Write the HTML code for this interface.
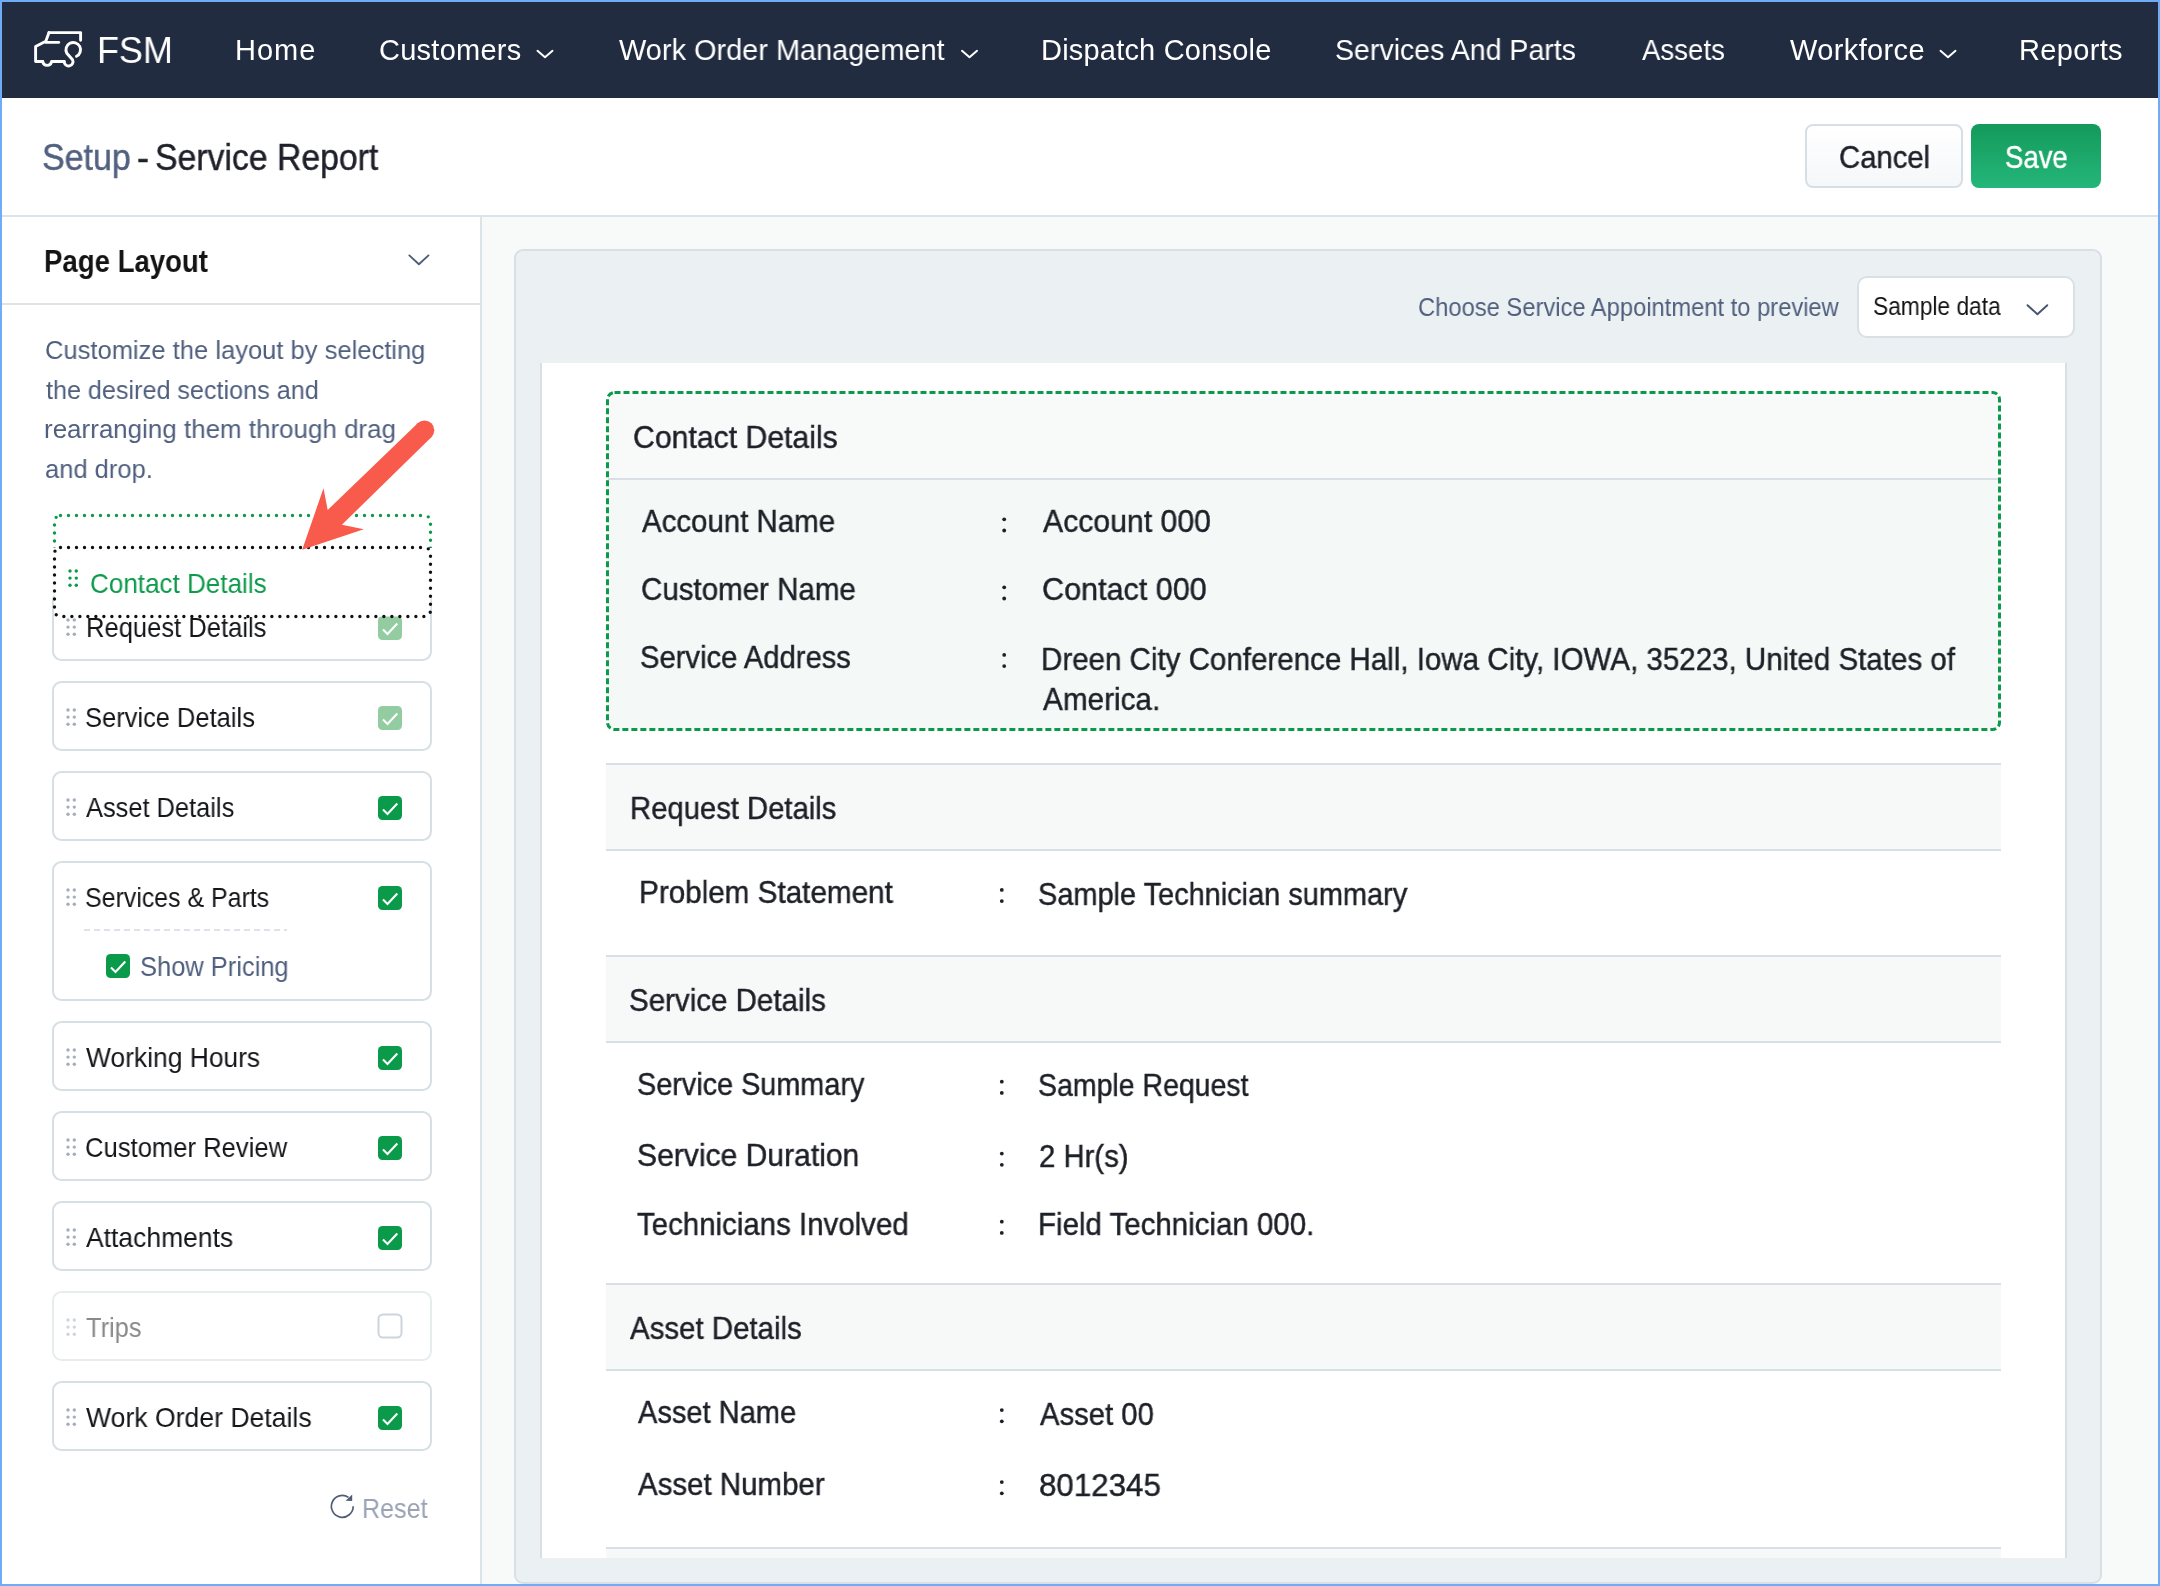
<!DOCTYPE html>
<html><head><meta charset="utf-8">
<style>
html,body{margin:0;padding:0;width:2160px;height:1586px;overflow:hidden;background:#6eacf8;}
body{position:relative;font-family:"Liberation Sans",sans-serif;}
.abs{position:absolute;}
.tx{position:absolute;white-space:nowrap;line-height:1;will-change:transform;}
svg{position:absolute;left:0;top:0;overflow:visible}
</style></head><body>
<div class="abs" style="left:2px;top:2px;width:2156px;height:1582px;background:#f8f9f9;overflow:hidden"></div>
<!-- nav -->
<div class="abs" style="left:2px;top:2px;width:2156px;height:96px;background:#222c40"></div>
<!-- header -->
<div class="abs" style="left:2px;top:98px;width:2156px;height:117px;background:#ffffff"></div>
<div class="abs" style="left:2px;top:215px;width:2156px;height:2px;background:#dce3e9"></div>
<!-- left panel -->
<div class="abs" style="left:2px;top:217px;width:478px;height:1367px;background:#ffffff"></div>
<div class="abs" style="left:480px;top:217px;width:2px;height:1367px;background:#dce3e9"></div>
<div class="abs" style="left:2px;top:303px;width:478px;height:2px;background:#dce3e9"></div>
<!-- buttons -->
<div class="abs" style="left:1805px;top:124px;width:154px;height:60px;border:2px solid #d6dfe5;border-radius:8px;background:linear-gradient(#ffffff,#f5f7f9)"></div>
<div class="abs" style="left:1971px;top:124px;width:130px;height:64px;border-radius:8px;background:linear-gradient(#139a5b,#25b67a)"></div>
<!-- preview panel -->
<div class="abs" style="left:514px;top:249px;width:1584px;height:1331px;border:2px solid #d8e0e6;border-radius:9px;background:#ebf0f3"></div>
<div class="abs" style="left:1857px;top:276px;width:214px;height:58px;border:2px solid #d8e0e6;border-radius:10px;background:#ffffff"></div>
<div class="abs" style="left:540px;top:363px;width:1523px;height:1195px;border-left:2px solid #d8e0e6;border-right:2px solid #d8e0e6;background:#ffffff"></div>
<!-- contact box -->
<div class="abs" style="left:608px;top:393px;width:1391px;height:336px;border-radius:7px;background:#f4f9f7;overflow:hidden">
  <div class="abs" style="left:0;top:0;width:1391px;height:85px;background:#f8f9f9"></div>
  <div class="abs" style="left:0;top:85px;width:1391px;height:2px;background:#d8e0e6"></div>
</div>
<svg width="2160" height="1586" style="z-index:3"><rect x="607.5" y="392.5" width="1392" height="337" rx="7" fill="none" stroke="#0a9a4a" stroke-width="3" stroke-dasharray="6 3"/></svg>
<!-- sections -->
<div class="abs" style="left:606px;top:763px;width:1395px;height:84px;border-top:2px solid #d8e0e6;border-bottom:2px solid #d8e0e6;background:#f7f9f9"></div>
<div class="abs" style="left:606px;top:955px;width:1395px;height:84px;border-top:2px solid #d8e0e6;border-bottom:2px solid #d8e0e6;background:#f7f9f9"></div>
<div class="abs" style="left:606px;top:1283px;width:1395px;height:84px;border-top:2px solid #d8e0e6;border-bottom:2px solid #d8e0e6;background:#f7f9f9"></div>
<div class="abs" style="left:606px;top:1547px;width:1395px;height:9px;border-top:2px solid #d8e0e6;background:#f7f9f9"></div>
<svg width="2160" height="1586" style="z-index:4">
<rect x="53" y="592" width="378" height="68" rx="8.5" fill="#fff" stroke="#d6dfe3" stroke-width="2"/>
<circle cx="68.0" cy="620.0" r="1.7" fill="#a6adbd"/><circle cx="74.3" cy="620.0" r="1.7" fill="#a6adbd"/><circle cx="68.0" cy="627.1" r="1.7" fill="#a6adbd"/><circle cx="74.3" cy="627.1" r="1.7" fill="#a6adbd"/><circle cx="68.0" cy="634.2" r="1.7" fill="#a6adbd"/><circle cx="74.3" cy="634.2" r="1.7" fill="#a6adbd"/>
<rect x="378" y="616" width="24" height="24" rx="4.5" fill="#94cca2"/><path d="M383.0 629.5 L387.5 634.0 L397.3 623.5" fill="none" stroke="#fff" stroke-width="2.1" stroke-linecap="butt"/>
<rect x="53" y="682" width="378" height="68" rx="8.5" fill="#fff" stroke="#d6dfe3" stroke-width="2"/>
<circle cx="68.0" cy="710.0" r="1.7" fill="#a6adbd"/><circle cx="74.3" cy="710.0" r="1.7" fill="#a6adbd"/><circle cx="68.0" cy="717.1" r="1.7" fill="#a6adbd"/><circle cx="74.3" cy="717.1" r="1.7" fill="#a6adbd"/><circle cx="68.0" cy="724.2" r="1.7" fill="#a6adbd"/><circle cx="74.3" cy="724.2" r="1.7" fill="#a6adbd"/>
<rect x="378" y="706" width="24" height="24" rx="4.5" fill="#94cca2"/><path d="M383.0 719.5 L387.5 724.0 L397.3 713.5" fill="none" stroke="#fff" stroke-width="2.1" stroke-linecap="butt"/>
<rect x="53" y="772" width="378" height="68" rx="8.5" fill="#fff" stroke="#d6dfe3" stroke-width="2"/>
<circle cx="68.0" cy="800.0" r="1.7" fill="#a6adbd"/><circle cx="74.3" cy="800.0" r="1.7" fill="#a6adbd"/><circle cx="68.0" cy="807.1" r="1.7" fill="#a6adbd"/><circle cx="74.3" cy="807.1" r="1.7" fill="#a6adbd"/><circle cx="68.0" cy="814.2" r="1.7" fill="#a6adbd"/><circle cx="74.3" cy="814.2" r="1.7" fill="#a6adbd"/>
<rect x="378" y="796" width="24" height="24" rx="4.5" fill="#0a9a4a"/><path d="M383.0 809.5 L387.5 814.0 L397.3 803.5" fill="none" stroke="#fff" stroke-width="2.1" stroke-linecap="butt"/>
<rect x="53" y="862" width="378" height="138" rx="8.5" fill="#fff" stroke="#d6dfe3" stroke-width="2"/>
<circle cx="68.0" cy="890.0" r="1.7" fill="#a6adbd"/><circle cx="74.3" cy="890.0" r="1.7" fill="#a6adbd"/><circle cx="68.0" cy="897.1" r="1.7" fill="#a6adbd"/><circle cx="74.3" cy="897.1" r="1.7" fill="#a6adbd"/><circle cx="68.0" cy="904.2" r="1.7" fill="#a6adbd"/><circle cx="74.3" cy="904.2" r="1.7" fill="#a6adbd"/>
<rect x="378" y="886" width="24" height="24" rx="4.5" fill="#0a9a4a"/><path d="M383.0 899.5 L387.5 904.0 L397.3 893.5" fill="none" stroke="#fff" stroke-width="2.1" stroke-linecap="butt"/>
<rect x="53" y="1022" width="378" height="68" rx="8.5" fill="#fff" stroke="#d6dfe3" stroke-width="2"/>
<circle cx="68.0" cy="1050.0" r="1.7" fill="#a6adbd"/><circle cx="74.3" cy="1050.0" r="1.7" fill="#a6adbd"/><circle cx="68.0" cy="1057.1" r="1.7" fill="#a6adbd"/><circle cx="74.3" cy="1057.1" r="1.7" fill="#a6adbd"/><circle cx="68.0" cy="1064.2" r="1.7" fill="#a6adbd"/><circle cx="74.3" cy="1064.2" r="1.7" fill="#a6adbd"/>
<rect x="378" y="1046" width="24" height="24" rx="4.5" fill="#0a9a4a"/><path d="M383.0 1059.5 L387.5 1064.0 L397.3 1053.5" fill="none" stroke="#fff" stroke-width="2.1" stroke-linecap="butt"/>
<rect x="53" y="1112" width="378" height="68" rx="8.5" fill="#fff" stroke="#d6dfe3" stroke-width="2"/>
<circle cx="68.0" cy="1140.0" r="1.7" fill="#a6adbd"/><circle cx="74.3" cy="1140.0" r="1.7" fill="#a6adbd"/><circle cx="68.0" cy="1147.1" r="1.7" fill="#a6adbd"/><circle cx="74.3" cy="1147.1" r="1.7" fill="#a6adbd"/><circle cx="68.0" cy="1154.2" r="1.7" fill="#a6adbd"/><circle cx="74.3" cy="1154.2" r="1.7" fill="#a6adbd"/>
<rect x="378" y="1136" width="24" height="24" rx="4.5" fill="#0a9a4a"/><path d="M383.0 1149.5 L387.5 1154.0 L397.3 1143.5" fill="none" stroke="#fff" stroke-width="2.1" stroke-linecap="butt"/>
<rect x="53" y="1202" width="378" height="68" rx="8.5" fill="#fff" stroke="#d6dfe3" stroke-width="2"/>
<circle cx="68.0" cy="1230.0" r="1.7" fill="#a6adbd"/><circle cx="74.3" cy="1230.0" r="1.7" fill="#a6adbd"/><circle cx="68.0" cy="1237.1" r="1.7" fill="#a6adbd"/><circle cx="74.3" cy="1237.1" r="1.7" fill="#a6adbd"/><circle cx="68.0" cy="1244.2" r="1.7" fill="#a6adbd"/><circle cx="74.3" cy="1244.2" r="1.7" fill="#a6adbd"/>
<rect x="378" y="1226" width="24" height="24" rx="4.5" fill="#0a9a4a"/><path d="M383.0 1239.5 L387.5 1244.0 L397.3 1233.5" fill="none" stroke="#fff" stroke-width="2.1" stroke-linecap="butt"/>
<rect x="53" y="1292" width="378" height="68" rx="8.5" fill="#fff" stroke="#e7edee" stroke-width="2"/>
<circle cx="68.0" cy="1320.0" r="1.7" fill="#d0d4dd"/><circle cx="74.3" cy="1320.0" r="1.7" fill="#d0d4dd"/><circle cx="68.0" cy="1327.1" r="1.7" fill="#d0d4dd"/><circle cx="74.3" cy="1327.1" r="1.7" fill="#d0d4dd"/><circle cx="68.0" cy="1334.2" r="1.7" fill="#d0d4dd"/><circle cx="74.3" cy="1334.2" r="1.7" fill="#d0d4dd"/>
<rect x="378.5" y="1314.5" width="23" height="23" rx="4.5" fill="#fff" stroke="#ced4dd" stroke-width="2"/>
<rect x="53" y="1382" width="378" height="68" rx="8.5" fill="#fff" stroke="#d6dfe3" stroke-width="2"/>
<circle cx="68.0" cy="1410.0" r="1.7" fill="#a6adbd"/><circle cx="74.3" cy="1410.0" r="1.7" fill="#a6adbd"/><circle cx="68.0" cy="1417.1" r="1.7" fill="#a6adbd"/><circle cx="74.3" cy="1417.1" r="1.7" fill="#a6adbd"/><circle cx="68.0" cy="1424.2" r="1.7" fill="#a6adbd"/><circle cx="74.3" cy="1424.2" r="1.7" fill="#a6adbd"/>
<rect x="378" y="1406" width="24" height="24" rx="4.5" fill="#0a9a4a"/><path d="M383.0 1419.5 L387.5 1424.0 L397.3 1413.5" fill="none" stroke="#fff" stroke-width="2.1" stroke-linecap="butt"/>
<line x1="84" y1="930" x2="287" y2="930" stroke="#d3dae2" stroke-width="1.5" stroke-dasharray="6 4"/>
<rect x="106" y="954" width="24" height="24" rx="4.5" fill="#0a9a4a"/><path d="M111.0 967.5 L115.5 972.0 L125.3 961.5" fill="none" stroke="#fff" stroke-width="2.1" stroke-linecap="butt"/>
<path d="M537.5 50.8 L545.0 57.3 L552.5 50.8" fill="none" stroke="#ffffff" stroke-width="2" stroke-linecap="round" stroke-linejoin="round"/>
<path d="M962.0 50.8 L969.5 57.3 L977.0 50.8" fill="none" stroke="#ffffff" stroke-width="2" stroke-linecap="round" stroke-linejoin="round"/>
<path d="M1940.5 50.8 L1948.0 57.3 L1955.5 50.8" fill="none" stroke="#ffffff" stroke-width="2" stroke-linecap="round" stroke-linejoin="round"/>
<path d="M409.3 255.4 L418.9 264.2 L428.5 255.4" fill="none" stroke="#4d5d7a" stroke-width="1.9" stroke-linecap="round" stroke-linejoin="round"/>
<path d="M2027.5 305.2 L2037.4 314.2 L2047.3 305.2" fill="none" stroke="#46546f" stroke-width="1.9" stroke-linecap="round" stroke-linejoin="round"/>
<path d="M353.2 1506.3 A10.9 10.9 0 1 1 348.5 1497.4" fill="none" stroke="#4f5d78" stroke-width="1.7"/><path d="M345.6 1500.8 L352.2 1494.6 L352.2 1501 Z" fill="#4f5d78"/>
</svg>
<svg style="position:absolute;left:30px;top:27px" width="58" height="46" viewBox="30 27 58 46">
<g fill="none" stroke="#fff" stroke-width="2.9" stroke-linejoin="round" stroke-linecap="round">
<path d="M49 32.6 L80.6 32.6 L80.6 40.2"/>
<path d="M49 32.6 L45.8 41.2 L35.6 46.5 L35.6 61.5 L42.7 61.5"/>
<path d="M45.8 42.4 L58.7 42.4"/>
<path d="M42.7 61.5 A4.5 4.5 0 0 0 51.6 61.5 L64.2 61.5"/>
<path d="M76.5 56.3 A7.3 7.3 0 1 0 66.8 53.2 L72.6 59.8 A4.4 4.4 0 1 1 64.2 61.5"/>
</g></svg>
<svg width="2160" height="1586" style="z-index:6"><defs><clipPath id="gclip"><rect x="40" y="500" width="400" height="48"/></clipPath></defs><rect clip-path="url(#gclip)" x="54.5" y="515.5" width="376" height="68" rx="6" fill="none" stroke="#0a9a4a" stroke-width="3.4" stroke-linecap="round" stroke-dasharray="0 8"/></svg>
<svg width="2160" height="1586" style="z-index:7"><rect x="54.5" y="547.5" width="376" height="69" rx="6" fill="#ffffff" stroke="#111111" stroke-width="3.4" stroke-linecap="round" stroke-dasharray="0 8"/><circle cx="70.0" cy="571.0" r="1.7" fill="#0e9a4c"/><circle cx="76.3" cy="571.0" r="1.7" fill="#0e9a4c"/><circle cx="70.0" cy="578.1" r="1.7" fill="#0e9a4c"/><circle cx="76.3" cy="578.1" r="1.7" fill="#0e9a4c"/><circle cx="70.0" cy="585.2" r="1.7" fill="#0e9a4c"/><circle cx="76.3" cy="585.2" r="1.7" fill="#0e9a4c"/></svg>
<svg width="2160" height="1586" style="z-index:9"><circle cx="424.5" cy="430.2" r="9.8" fill="#f85a4b"/><path d="M431.3 437.2 L417.7 423.2 L327.7 510 L323.5 488.2 L302.2 549.7 L363.8 529.3 L341.9 524.8 Z" fill="#f85a4b"/></svg>
<svg width="2160" height="1586" style="z-index:5"><circle cx="1004.2" cy="519.30" r="1.9" fill="#1e2028"/><circle cx="1004.2" cy="530.50" r="1.9" fill="#1e2028"/><circle cx="1004.2" cy="587.30" r="1.9" fill="#1e2028"/><circle cx="1004.2" cy="598.50" r="1.9" fill="#1e2028"/><circle cx="1004.2" cy="654.90" r="1.9" fill="#1e2028"/><circle cx="1004.2" cy="666.10" r="1.9" fill="#1e2028"/><circle cx="1001.8" cy="889.90" r="1.9" fill="#1e2028"/><circle cx="1001.8" cy="901.10" r="1.9" fill="#1e2028"/><circle cx="1001.8" cy="1081.70" r="1.9" fill="#1e2028"/><circle cx="1001.8" cy="1092.90" r="1.9" fill="#1e2028"/><circle cx="1001.8" cy="1153.60" r="1.9" fill="#1e2028"/><circle cx="1001.8" cy="1164.80" r="1.9" fill="#1e2028"/><circle cx="1001.8" cy="1221.70" r="1.9" fill="#1e2028"/><circle cx="1001.8" cy="1232.90" r="1.9" fill="#1e2028"/><circle cx="1001.8" cy="1410.10" r="1.9" fill="#1e2028"/><circle cx="1001.8" cy="1421.30" r="1.9" fill="#1e2028"/><circle cx="1001.8" cy="1482.10" r="1.9" fill="#1e2028"/><circle cx="1001.8" cy="1493.30" r="1.9" fill="#1e2028"/></svg>
<div class="tx" style="left:97.00px;top:32.00px;font-size:37px;font-weight:400;color:#ffffff;letter-spacing:0.000px;z-index:5;transform:scaleX(0.9722);transform-origin:0 0">FSM</div>
<div class="tx" style="left:235.00px;top:36.00px;font-size:29px;font-weight:400;color:#ffffff;letter-spacing:1.000px;z-index:5">Home</div>
<div class="tx" style="left:379.00px;top:36.00px;font-size:29px;font-weight:400;color:#ffffff;letter-spacing:0.250px;z-index:5">Customers</div>
<div class="tx" style="left:619.00px;top:36.00px;font-size:29px;font-weight:400;color:#ffffff;letter-spacing:0.000px;z-index:5;transform:scaleX(0.9969);transform-origin:0 0">Work Order Management</div>
<div class="tx" style="left:1041.00px;top:36.00px;font-size:29px;font-weight:400;color:#ffffff;letter-spacing:0.200px;z-index:5">Dispatch Console</div>
<div class="tx" style="left:1335.00px;top:36.00px;font-size:29px;font-weight:400;color:#ffffff;letter-spacing:0.000px;z-index:5;transform:scaleX(0.9835);transform-origin:0 0">Services And Parts</div>
<div class="tx" style="left:1642.00px;top:36.00px;font-size:29px;font-weight:400;color:#ffffff;letter-spacing:0.000px;z-index:5;transform:scaleX(0.9535);transform-origin:0 0">Assets</div>
<div class="tx" style="left:1790.00px;top:36.00px;font-size:29px;font-weight:400;color:#ffffff;letter-spacing:0.375px;z-index:5">Workforce</div>
<div class="tx" style="left:2019.00px;top:36.00px;font-size:29px;font-weight:400;color:#ffffff;letter-spacing:0.333px;z-index:5">Reports</div>
<div class="tx" style="left:42.00px;top:140.00px;font-size:36px;font-weight:400;color:#52617f;letter-spacing:0.000px;z-index:5;transform:scaleX(0.9440);transform-origin:0 0;-webkit-text-stroke:0.45px #52617f">Setup</div>
<div class="tx" style="left:136.70px;top:140.00px;font-size:36px;font-weight:400;color:#1f2029;letter-spacing:0.000px;z-index:5;-webkit-text-stroke:0.45px #1f2029">-</div>
<div class="tx" style="left:154.70px;top:140.00px;font-size:36px;font-weight:400;color:#1f2029;letter-spacing:0.000px;z-index:5;transform:scaleX(0.9381);transform-origin:0 0;-webkit-text-stroke:0.45px #1f2029">Service Report</div>
<div class="tx" style="left:1838.50px;top:142.00px;font-size:31.7px;font-weight:400;color:#1f2029;letter-spacing:0.000px;z-index:5;transform:scaleX(0.9233);transform-origin:0 0;-webkit-text-stroke:0.45px #1f2029">Cancel</div>
<div class="tx" style="left:2005.00px;top:142.00px;font-size:31.7px;font-weight:400;color:#ffffff;letter-spacing:0.000px;z-index:5;transform:scaleX(0.8682);transform-origin:0 0;-webkit-text-stroke:0.45px #ffffff">Save</div>
<div class="tx" style="left:44.00px;top:245.00px;font-size:32px;font-weight:700;color:#141414;letter-spacing:0.000px;z-index:5;transform:scaleX(0.8617);transform-origin:0 0">Page Layout</div>
<div class="tx" style="left:44.60px;top:337.00px;font-size:26px;font-weight:400;color:#4f5f7d;letter-spacing:0.000px;z-index:5;transform:scaleX(0.9821);transform-origin:0 0">Customize the layout by selecting</div>
<div class="tx" style="left:45.60px;top:377.00px;font-size:26px;font-weight:400;color:#4f5f7d;letter-spacing:0.000px;z-index:5;transform:scaleX(0.9675);transform-origin:0 0">the desired sections and</div>
<div class="tx" style="left:43.60px;top:416.00px;font-size:26px;font-weight:400;color:#4f5f7d;letter-spacing:0.000px;z-index:5;transform:scaleX(0.9980);transform-origin:0 0">rearranging them through drag</div>
<div class="tx" style="left:44.60px;top:456.00px;font-size:26px;font-weight:400;color:#4f5f7d;letter-spacing:0.000px;z-index:5;transform:scaleX(0.9813);transform-origin:0 0">and drop.</div>
<div class="tx" style="left:89.70px;top:570.00px;font-size:27.3px;font-weight:400;color:#0e9a4c;letter-spacing:0.000px;z-index:8;transform:scaleX(0.9541);transform-origin:0 0">Contact Details</div>
<div class="tx" style="left:85.70px;top:614.00px;font-size:27.3px;font-weight:400;color:#151619;letter-spacing:0.000px;z-index:4;transform:scaleX(0.9363);transform-origin:0 0">Request Details</div>
<div class="tx" style="left:85.00px;top:704.00px;font-size:27.3px;font-weight:400;color:#151619;letter-spacing:0.000px;z-index:5;transform:scaleX(0.9333);transform-origin:0 0">Service Details</div>
<div class="tx" style="left:86.00px;top:794.00px;font-size:27.3px;font-weight:400;color:#151619;letter-spacing:0.000px;z-index:5;transform:scaleX(0.9309);transform-origin:0 0">Asset Details</div>
<div class="tx" style="left:85.00px;top:884.00px;font-size:27.3px;font-weight:400;color:#151619;letter-spacing:0.000px;z-index:5;transform:scaleX(0.9130);transform-origin:0 0">Services &amp; Parts</div>
<div class="tx" style="left:139.50px;top:953.00px;font-size:27.3px;font-weight:400;color:#4f5f7d;letter-spacing:0.000px;z-index:5;transform:scaleX(0.9331);transform-origin:0 0">Show Pricing</div>
<div class="tx" style="left:86.00px;top:1044.00px;font-size:27.3px;font-weight:400;color:#151619;letter-spacing:0.000px;z-index:5;transform:scaleX(0.9676);transform-origin:0 0">Working Hours</div>
<div class="tx" style="left:85.00px;top:1134.00px;font-size:27.3px;font-weight:400;color:#151619;letter-spacing:0.000px;z-index:5;transform:scaleX(0.9382);transform-origin:0 0">Customer Review</div>
<div class="tx" style="left:86.00px;top:1224.00px;font-size:27.3px;font-weight:400;color:#151619;letter-spacing:0.000px;z-index:5;transform:scaleX(0.9702);transform-origin:0 0">Attachments</div>
<div class="tx" style="left:86.00px;top:1314.00px;font-size:27.3px;font-weight:400;color:#8a8a8a;letter-spacing:0.000px;z-index:5;transform:scaleX(0.9313);transform-origin:0 0">Trips</div>
<div class="tx" style="left:86.00px;top:1404.00px;font-size:27.3px;font-weight:400;color:#151619;letter-spacing:0.000px;z-index:5;transform:scaleX(0.9745);transform-origin:0 0">Work Order Details</div>
<div class="tx" style="left:362.00px;top:1495.00px;font-size:27.8px;font-weight:400;color:#99a3b5;letter-spacing:0.000px;z-index:5;transform:scaleX(0.9016);transform-origin:0 0">Reset</div>
<div class="tx" style="left:1418.00px;top:295.00px;font-size:25.6px;font-weight:400;color:#4f5f7d;letter-spacing:0.000px;z-index:5;transform:scaleX(0.9272);transform-origin:0 0">Choose Service Appointment to preview</div>
<div class="tx" style="left:1872.50px;top:294.00px;font-size:25px;font-weight:400;color:#141414;letter-spacing:0.000px;z-index:5;transform:scaleX(0.9100);transform-origin:0 0">Sample data</div>
<div class="tx" style="left:632.50px;top:422.00px;font-size:31.7px;font-weight:400;color:#1e2028;letter-spacing:0.000px;z-index:5;transform:scaleX(0.9529);transform-origin:0 0;-webkit-text-stroke:0.45px #1e2028">Contact Details</div>
<div class="tx" style="left:641.60px;top:506.00px;font-size:31.7px;font-weight:400;color:#1e2028;letter-spacing:0.000px;z-index:5;transform:scaleX(0.9290);transform-origin:0 0;-webkit-text-stroke:0.45px #1e2028">Account Name</div>
<div class="tx" style="left:1043.20px;top:506.00px;font-size:31.7px;font-weight:400;color:#1e2028;letter-spacing:0.000px;z-index:5;transform:scaleX(0.9532);transform-origin:0 0;-webkit-text-stroke:0.45px #1e2028">Account 000</div>
<div class="tx" style="left:640.60px;top:574.00px;font-size:31.7px;font-weight:400;color:#1e2028;letter-spacing:0.000px;z-index:5;transform:scaleX(0.9313);transform-origin:0 0;-webkit-text-stroke:0.45px #1e2028">Customer Name</div>
<div class="tx" style="left:1042.20px;top:574.00px;font-size:31.7px;font-weight:400;color:#1e2028;letter-spacing:0.000px;z-index:5;transform:scaleX(0.9637);transform-origin:0 0;-webkit-text-stroke:0.45px #1e2028">Contact 000</div>
<div class="tx" style="left:639.60px;top:642.00px;font-size:31.7px;font-weight:400;color:#1e2028;letter-spacing:0.000px;z-index:5;transform:scaleX(0.9212);transform-origin:0 0;-webkit-text-stroke:0.45px #1e2028">Service Address</div>
<div class="tx" style="left:1041.20px;top:644.00px;font-size:31.7px;font-weight:400;color:#1e2028;letter-spacing:0.000px;z-index:5;transform:scaleX(0.9317);transform-origin:0 0;-webkit-text-stroke:0.45px #1e2028">Dreen City Conference Hall, Iowa City, IOWA, 35223, United States of</div>
<div class="tx" style="left:1043.20px;top:684.00px;font-size:31.7px;font-weight:400;color:#1e2028;letter-spacing:0.000px;z-index:5;transform:scaleX(0.9377);transform-origin:0 0;-webkit-text-stroke:0.45px #1e2028">America.</div>
<div class="tx" style="left:630.10px;top:793.00px;font-size:31.7px;font-weight:400;color:#1e2028;letter-spacing:0.000px;z-index:5;transform:scaleX(0.9227);transform-origin:0 0;-webkit-text-stroke:0.45px #1e2028">Request Details</div>
<div class="tx" style="left:638.60px;top:877.00px;font-size:31.7px;font-weight:400;color:#1e2028;letter-spacing:0.000px;z-index:5;transform:scaleX(0.9358);transform-origin:0 0;-webkit-text-stroke:0.45px #1e2028">Problem Statement</div>
<div class="tx" style="left:1038.40px;top:879.00px;font-size:31.7px;font-weight:400;color:#1e2028;letter-spacing:0.000px;z-index:5;transform:scaleX(0.9127);transform-origin:0 0;-webkit-text-stroke:0.45px #1e2028">Sample Technician summary</div>
<div class="tx" style="left:628.50px;top:985.00px;font-size:31.7px;font-weight:400;color:#1e2028;letter-spacing:0.000px;z-index:5;transform:scaleX(0.9313);transform-origin:0 0;-webkit-text-stroke:0.45px #1e2028">Service Details</div>
<div class="tx" style="left:636.90px;top:1069.00px;font-size:31.7px;font-weight:400;color:#1e2028;letter-spacing:0.000px;z-index:5;transform:scaleX(0.9093);transform-origin:0 0;-webkit-text-stroke:0.45px #1e2028">Service Summary</div>
<div class="tx" style="left:1038.40px;top:1070.00px;font-size:31.7px;font-weight:400;color:#1e2028;letter-spacing:0.000px;z-index:5;transform:scaleX(0.8987);transform-origin:0 0;-webkit-text-stroke:0.45px #1e2028">Sample Request</div>
<div class="tx" style="left:636.90px;top:1140.00px;font-size:31.7px;font-weight:400;color:#1e2028;letter-spacing:0.000px;z-index:5;transform:scaleX(0.9491);transform-origin:0 0;-webkit-text-stroke:0.45px #1e2028">Service Duration</div>
<div class="tx" style="left:1039.40px;top:1141.00px;font-size:31.7px;font-weight:400;color:#1e2028;letter-spacing:0.000px;z-index:5;transform:scaleX(0.9249);transform-origin:0 0;-webkit-text-stroke:0.45px #1e2028">2 Hr(s)</div>
<div class="tx" style="left:637.20px;top:1209.00px;font-size:31.7px;font-weight:400;color:#1e2028;letter-spacing:0.000px;z-index:5;transform:scaleX(0.9290);transform-origin:0 0;-webkit-text-stroke:0.45px #1e2028">Technicians Involved</div>
<div class="tx" style="left:1038.40px;top:1209.00px;font-size:31.7px;font-weight:400;color:#1e2028;letter-spacing:0.000px;z-index:5;transform:scaleX(0.9299);transform-origin:0 0;-webkit-text-stroke:0.45px #1e2028">Field Technician 000.</div>
<div class="tx" style="left:630.00px;top:1313.00px;font-size:31.7px;font-weight:400;color:#1e2028;letter-spacing:0.000px;z-index:5;transform:scaleX(0.9293);transform-origin:0 0;-webkit-text-stroke:0.45px #1e2028">Asset Details</div>
<div class="tx" style="left:638.10px;top:1397.00px;font-size:31.7px;font-weight:400;color:#1e2028;letter-spacing:0.000px;z-index:5;transform:scaleX(0.9164);transform-origin:0 0;-webkit-text-stroke:0.45px #1e2028">Asset Name</div>
<div class="tx" style="left:1040.30px;top:1399.00px;font-size:31.7px;font-weight:400;color:#1e2028;letter-spacing:0.000px;z-index:5;transform:scaleX(0.9230);transform-origin:0 0;-webkit-text-stroke:0.45px #1e2028">Asset 00</div>
<div class="tx" style="left:638.10px;top:1469.00px;font-size:31.7px;font-weight:400;color:#1e2028;letter-spacing:0.000px;z-index:5;transform:scaleX(0.9294);transform-origin:0 0;-webkit-text-stroke:0.45px #1e2028">Asset Number</div>
<div class="tx" style="left:1039.30px;top:1470.00px;font-size:31.7px;font-weight:400;color:#1e2028;letter-spacing:0.000px;z-index:5;transform:scaleX(0.9885);transform-origin:0 0;-webkit-text-stroke:0.45px #1e2028">8012345</div>
</body></html>
